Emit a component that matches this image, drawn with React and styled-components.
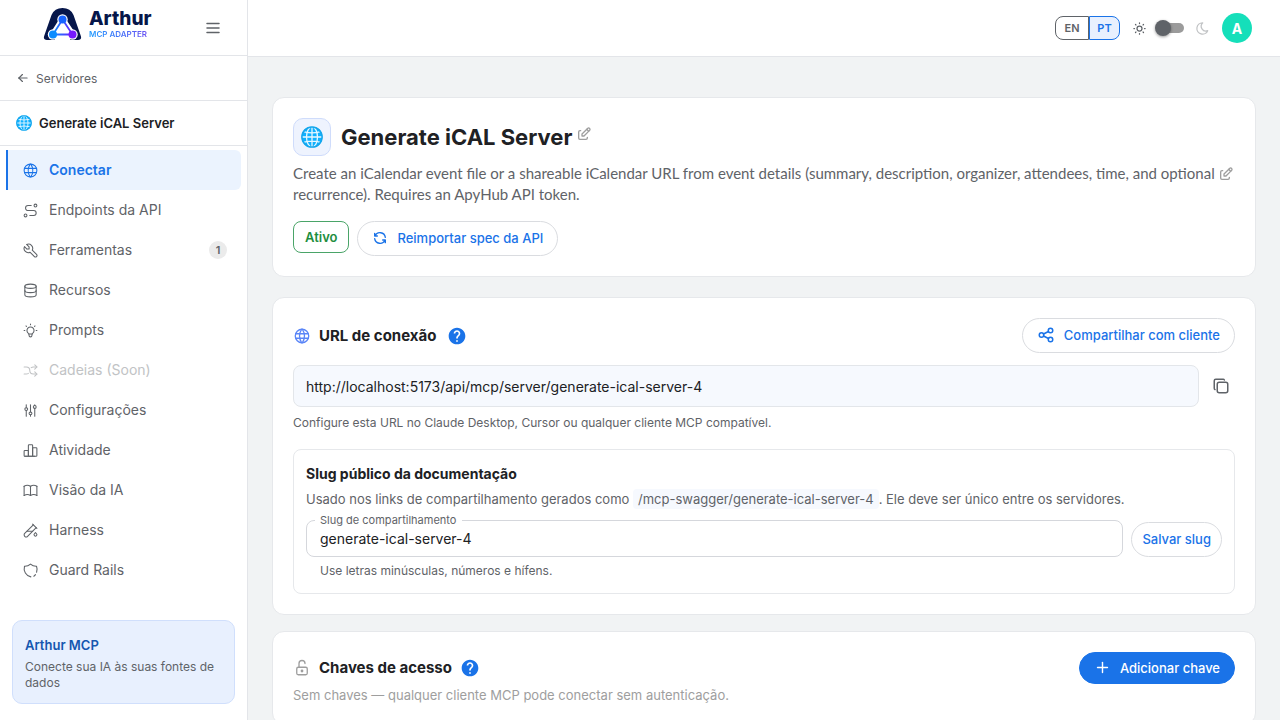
import React, { useState } from "react";
import styled, { createGlobalStyle, css } from "styled-components";
import {
  TbWorld, TbRoute, TbTool, TbDatabase, TbBulb, TbArrowsShuffle, TbAdjustments,
  TbChartBar, TbBook, TbTestPipe, TbMenu2, TbArrowLeft, TbSun, TbMoon, TbEdit,
  TbRefresh, TbShare, TbCopy, TbLockOpen, TbPlus,
} from "react-icons/tb";
import { MdHelp } from "react-icons/md";

const Global = createGlobalStyle`
  * { box-sizing: border-box; }
  body { margin: 0; background: #f1f3f4; }
  body, button, input { font-family: "Inter", "Liberation Sans", sans-serif; }
  h1, h2, h3, p { margin: 0; }
  button { cursor: pointer; }
  svg { display: block; flex: none; }
`;

const Shell = styled.div`
  display: grid;
  grid-template-columns: 248px minmax(0, 1fr);
  height: 100vh;
  color: #202124;
`;

const Sidebar = styled.aside`
  display: flex;
  flex-direction: column;
  background: #fff;
  border-right: 1px solid #e3e5e9;
`;

const Brand = styled.div`
  display: flex;
  align-items: center;
  justify-content: space-between;
  height: 56px;
  padding: 0 25px 8px 43px;
  border-bottom: 1px solid #e3e5e9;
`;

const Logo = styled.div`
  display: flex;
  align-items: center;
  gap: 6px;
`;

const LogoText = styled.div`
  display: flex;
  flex-direction: column;
`;

const LogoName = styled.span`
  font-size: 19px;
  line-height: 22px;
  font-weight: 800;
  color: #06164a;
`;

const LogoTag = styled.span`
  font-size: 8px;
  line-height: 9px;
  font-weight: 600;
  color: transparent;
  background: linear-gradient(90deg, #1d9bff, #6d4bf2);
  background-clip: text;
`;

const IconButton = styled.button`
  display: grid;
  place-items: center;
  padding: 0;
  border: 0;
  background: none;
  color: ${(p) => p.$color || "#5f6368"};
`;

const MenuButton = styled(IconButton)`
  padding-top: 8px;
`;

const BackLink = styled.a`
  display: flex;
  align-items: center;
  gap: 6px;
  height: 45px;
  padding: 0 16px;
  border-bottom: 1px solid #e3e5e9;
  color: #5f6368;
  font-size: 12px;
  text-decoration: none;
`;

const ServerName = styled.div`
  display: flex;
  align-items: center;
  gap: 7px;
  height: 45px;
  padding: 0 16px;
  border-bottom: 1px solid #e3e5e9;
  font-size: 13px;
  font-weight: 600;
`;

const Nav = styled.nav`
  display: flex;
  flex-direction: column;
  padding: 4px 6px;
`;

const NavItem = styled.a`
  display: flex;
  align-items: center;
  gap: 10px;
  height: 40px;
  padding: 0 14px;
  border-left: 2px solid transparent;
  border-radius: 0 6px 6px 0;
  color: #5f6368;
  font-size: 14px;
  line-height: 18px;
  text-decoration: none;
  ${(p) => p.$active && css`
    background: #ebf3fe;
    border-left-color: #1a73e8;
    color: #1a73e8;
    font-weight: 600;
  `}
  ${(p) => p.$disabled && css`color: #c1c3c5;`}
`;

const Count = styled.span`
  display: grid;
  place-items: center;
  width: 18px;
  height: 18px;
  margin-left: auto;
  border-radius: 50%;
  background: #ebebeb;
  font-size: 11px;
  font-weight: 600;
`;

const Promo = styled.div`
  margin: auto 12px 16px;
  padding: 16px 12px 12px;
  border: 1px solid #d0dffc;
  border-radius: 10px;
  background: #e8f0fe;
  color: #5f6368;
  font-size: 12px;
  line-height: 16px;
`;

const PromoTitle = styled.h3`
  margin-bottom: 5px;
  font-size: 13px;
  line-height: 17px;
  font-weight: 600;
  color: #1557b0;
`;

const Body = styled.div`
  display: flex;
  flex-direction: column;
  min-height: 0;
`;

const TopBar = styled.header`
  display: flex;
  flex: none;
  align-items: center;
  justify-content: flex-end;
  height: 57px;
  padding: 0 28px;
  background: #fff;
  border-bottom: 1px solid #e3e5e9;
`;

const Languages = styled.div`
  display: flex;
  margin-right: 12px;
`;

const LanguageButton = styled.button`
  width: ${(p) => (p.$active ? 31 : 34)}px;
  height: 24px;
  padding: 0;
  border: 1px solid ${(p) => (p.$active ? "#1a73e8" : "#5f6368")};
  border-radius: ${(p) => (p.$active ? "0 8px 8px 0" : "8px 0 0 8px")};
  background: ${(p) => (p.$active ? "#e8f0fe" : "#fff")};
  color: ${(p) => (p.$active ? "#1a73e8" : "#5f6368")};
  font-size: 11px;
  font-weight: 600;
`;

const Toggle = styled.input`
  appearance: none;
  display: flex;
  align-items: center;
  width: 30px;
  height: 16px;
  margin: 0 10px 0 8px;
  border-radius: 8px;
  cursor: pointer;
  &::before {
    content: "";
    z-index: 1;
    width: 16px;
    height: 16px;
    border-radius: 50%;
    background: #5f6368;
    box-shadow: 0 1px 3px rgba(0, 0, 0, 0.4);
  }
  &::after {
    content: "";
    width: 28px;
    height: 10px;
    margin-left: -15px;
    border-radius: 5px;
    background: #9b9b9b;
  }
  &:checked::before { margin-left: 14px; }
  &:checked::after { margin-left: -29px; }
`;

const Avatar = styled.button`
  width: 30px;
  height: 30px;
  margin-left: 12px;
  padding: 0;
  border: 0;
  border-radius: 50%;
  background: #15dfba;
  color: #fff;
  font-size: 14px;
  font-weight: 700;
`;

const Main = styled.main`
  flex: 1;
  min-height: 0;
  overflow-y: auto;
  scrollbar-width: none;
  padding: 40px 24px 24px;
`;

const Card = styled.section`
  margin-bottom: ${(p) => p.$gap || 16}px;
  padding: 20px;
  border: 1px solid #e6e8eb;
  border-radius: 12px;
  background: #fff;
`;

const TitleRow = styled.div`
  display: flex;
  align-items: center;
  gap: 10px;
  margin-bottom: 7px;
`;

const ServerIcon = styled.span`
  display: grid;
  place-items: center;
  width: 38px;
  height: 38px;
  border: 1px solid #cfdcfb;
  border-radius: 10px;
  background: #eef3fe;
`;

const PageTitle = styled.h1`
  display: flex;
  align-items: flex-start;
  gap: 4px;
  font-size: 22px;
  line-height: 28px;
  font-weight: 700;
`;

const DescriptionRow = styled.div`
  display: flex;
  align-items: flex-start;
  padding-right: 1px;
`;

const Description = styled.p`
  flex: 1;
  color: #5f6368;
  font-family: "Lato", "Inter", sans-serif;
  font-size: 15px;
  line-height: 21px;
`;

const EditButton = styled(IconButton)`
  padding-top: 3px;
`;

const Actions = styled.div`
  display: flex;
  align-items: flex-start;
  gap: 8px;
  margin-top: 16px;
`;

const Status = styled.span`
  display: flex;
  align-items: center;
  height: 32px;
  padding: 0 11px;
  border: 1px solid #4aa468;
  border-radius: 8px;
  color: #1e8e3e;
  font-size: 13px;
  font-weight: 600;
`;

const Button = styled.button`
  display: flex;
  flex: none;
  align-items: center;
  justify-content: center;
  gap: 9px;
  height: ${(p) => p.$height || 35}px;
  padding: 0 ${(p) => (p.$compact ? 10 : 14)}px 1px;
  border: 1px solid ${(p) => (p.$primary ? "#1a73e8" : "#dadce0")};
  border-radius: 18px;
  background: ${(p) => (p.$primary ? "#1a73e8" : "#fff")};
  color: ${(p) => (p.$primary ? "#fff" : "#1a73e8")};
  font-size: 13px;
  font-weight: 500;
`;

const CardHeader = styled.div`
  display: flex;
  align-items: center;
  justify-content: space-between;
`;

const CardTitle = styled.h2`
  display: flex;
  align-items: center;
  gap: 8px;
  font-size: 15px;
  line-height: 20px;
  font-weight: 700;
`;

const HelpButton = styled(IconButton)`
  margin-left: ${(p) => (p.$spaced ? 3 : 0)}px;
`;

const UrlRow = styled.div`
  display: flex;
  align-items: center;
  gap: 13px;
  margin-top: 12px;
  padding-right: 5px;
`;

const UrlField = styled.input`
  flex: 1;
  min-width: 0;
  height: 42px;
  padding: 0 12px;
  border: 1px solid #e3e6ea;
  border-radius: 8px;
  background: #f6f9fe;
  color: #202124;
  font-size: 14px;
  outline: none;
`;

const Hint = styled.p`
  margin-top: ${(p) => p.$top || 0}px;
  padding-left: ${(p) => p.$indent || 0}px;
  color: ${(p) => (p.$muted ? "#9e9e9e" : "#5f6368")};
  font-size: ${(p) => p.$size || 12}px;
  line-height: 18px;
`;

const SlugPanel = styled.div`
  margin-top: 17px;
  padding: 14px 12px 13px;
  border: 1px solid #e6e8eb;
  border-radius: 8px;
`;

const SlugTitle = styled.h3`
  font-size: 14px;
  line-height: 20px;
  font-weight: 700;
`;

const SlugText = styled.p`
  margin-top: 5px;
  color: #5f6368;
  font-size: 13px;
  line-height: 20px;
`;

const Code = styled.code`
  padding: 2px 5px;
  border-radius: 4px;
  background: #f6f9fe;
  font-family: inherit;
`;

const SlugForm = styled.form`
  display: flex;
  align-items: flex-end;
  gap: 8px;
  margin-top: 3px;
`;

const Field = styled.fieldset`
  flex: 1;
  min-width: 0;
  height: 45px;
  margin: 0;
  padding: 0 13px;
  border: 1px solid #d5d7dc;
  border-radius: 8px;
`;

const Legend = styled.legend`
  margin-left: -5px;
  padding: 0 6px 0 5px;
  color: #5f6368;
  font-size: 11px;
  line-height: 16px;
`;

const SlugInput = styled.input`
  display: block;
  width: 100%;
  height: 20px;
  padding: 0;
  border: 0;
  background: none;
  color: #202124;
  font-size: 14px;
  outline: none;
`;

function GlobeEmoji({ size }) {
  return (
    <svg width={size} height={size} viewBox="0 0 24 24" aria-hidden="true">
      <circle cx="12" cy="12" r="11.5" fill="#0fb0ff" />
      <g fill="none" stroke="#e6f7ff" strokeWidth="1.4">
        <path d="M12 1v22M1 12h22M3.500 6.500Q12 8.500 20.500 6.500M3.500 17.500Q12 15.500 20.500 17.500" />
        <ellipse cx="12" cy="12" rx="6" ry="11" />
      </g>
      <circle cx="12" cy="12" r="11" fill="none" stroke="#14a6ec" strokeWidth="1.6" />
    </svg>
  );
}

function ShieldIcon({ size, strokeWidth }) {
  return (
    <svg width={size} height={size} viewBox="0 0 24 24" fill="none" stroke="currentColor" strokeWidth={strokeWidth} strokeLinecap="round" strokeLinejoin="round" aria-hidden="true">
      <path d="M12.500 21A12 12 0 0 1 3.500 6 12 12 0 0 0 12 3a12 12 0 0 0 8.500 3 12 12 0 0 1 .1 8.500M19 17.800q-1 1.500-2.300 2.200" />
    </svg>
  );
}

function LogoMark() {
  return (
    <svg width="40" height="34" viewBox="0 0 40 34" aria-hidden="true">
      <defs>
        <linearGradient id="edge" x1="0" x2="1">
          <stop offset="0" stopColor="#0b8bff" />
          <stop offset="1" stopColor="#6a22ff" />
        </linearGradient>
      </defs>
      <path d="M1.500 28 8.500 8Q11.500 1 19.500 1T30.500 8L37.500 28Q39.500 33 35 33H4Q-.5 33 1.500 28Z" fill="#06164a" />
      <path d="M8 33.500Q19.500 31 31 33.500V34H8Z" fill="#fff" />
      <path d="M19.500 12.500 10 27.500H29.500Z" fill="#fff" stroke="#fff" strokeWidth="6" strokeLinejoin="round" />
      <circle cx="19.500" cy="12.500" r="5.200" fill="#fff" />
      <circle cx="10" cy="27.500" r="5.200" fill="#fff" />
      <circle cx="29.500" cy="27.500" r="5.200" fill="#fff" />
      <path d="M12 29.500H27V34H12Z" fill="#fff" />
      <path d="M19.500 12.500 10 27.500H29.500Z" fill="#fff" stroke="url(#edge)" strokeWidth="1.800" />
      <circle cx="19.500" cy="12.500" r="4" fill="#1764ff" />
      <circle cx="10" cy="27.500" r="4" fill="#0b8bff" />
      <circle cx="29.500" cy="27.500" r="4" fill="#7619ff" />
    </svg>
  );
}

const NAV = [
  { label: "Conectar", icon: TbWorld, active: true },
  { label: "Endpoints da API", icon: TbRoute },
  { label: "Ferramentas", icon: TbTool, count: 1 },
  { label: "Recursos", icon: TbDatabase },
  { label: "Prompts", icon: TbBulb },
  { label: "Cadeias (Soon)", icon: TbArrowsShuffle, disabled: true },
  { label: "Configurações", icon: TbAdjustments },
  { label: "Atividade", icon: TbChartBar },
  { label: "Visão da IA", icon: TbBook },
  { label: "Harness", icon: TbTestPipe },
  { label: "Guard Rails", icon: ShieldIcon },
];

export default function App() {
  const [dark, setDark] = useState(false);
  const [slug, setSlug] = useState("generate-ical-server-4");

  return (
    <>
      <Global />
      <Shell>
        <Sidebar>
          <Brand>
            <Logo>
              <LogoMark />
              <LogoText>
                <LogoName>Arthur</LogoName>
                <LogoTag>MCP ADAPTER</LogoTag>
              </LogoText>
            </Logo>
            <MenuButton aria-label="Menu"><TbMenu2 size={18} /></MenuButton>
          </Brand>
          <BackLink href="#servidores"><TbArrowLeft size={14} />Servidores</BackLink>
          <ServerName><GlobeEmoji size={16} />Generate iCAL Server</ServerName>
          <Nav>
            {NAV.map(({ label, icon: Icon, active, disabled, count }) => (
              <NavItem key={label} href="#" $active={active} $disabled={disabled} aria-disabled={disabled}>
                <Icon size={17} strokeWidth={1.5} />
                {label}
                {count && <Count>{count}</Count>}
              </NavItem>
            ))}
          </Nav>
          <Promo>
            <PromoTitle>Arthur MCP</PromoTitle>
            <p>Conecte sua IA às suas fontes de dados</p>
          </Promo>
        </Sidebar>

        <Body>
          <TopBar>
            <Languages>
              <LanguageButton>EN</LanguageButton>
              <LanguageButton $active>PT</LanguageButton>
            </Languages>
            <TbSun size={15} color="#5f6368" />
            <Toggle type="checkbox" role="switch" aria-label="Tema escuro" checked={dark} onChange={(e) => setDark(e.target.checked)} />
            <TbMoon size={15} color="#c1c3c5" />
            <Avatar>A</Avatar>
          </TopBar>

          <Main>
            <Card $gap={20}>
              <TitleRow>
                <ServerIcon><GlobeEmoji size={22} /></ServerIcon>
                <PageTitle>
                  Generate iCAL Server
                  <EditButton $color="#9e9e9e" aria-label="Editar nome"><TbEdit size={16} /></EditButton>
                </PageTitle>
              </TitleRow>
              <DescriptionRow>
                <Description>
                  Create an iCalendar event file or a shareable iCalendar URL from event details (summary, description, organizer, attendees, time, and optional recurrence). Requires an ApyHub API token.
                </Description>
                <EditButton $color="#9e9e9e" aria-label="Editar descrição"><TbEdit size={16} /></EditButton>
              </DescriptionRow>
              <Actions>
                <Status>Ativo</Status>
                <Button><TbRefresh size={16} />Reimportar spec da API</Button>
              </Actions>
            </Card>

            <Card>
              <CardHeader>
                <CardTitle>
                  <TbWorld size={18} strokeWidth={1.75} color="#5b86f7" />
                  URL de conexão
                  <HelpButton $color="#1a73e8" $spaced aria-label="Ajuda"><MdHelp size={20} /></HelpButton>
                </CardTitle>
                <Button><TbShare size={18} />Compartilhar com cliente</Button>
              </CardHeader>
              <UrlRow>
                <UrlField readOnly aria-label="URL de conexão" value="http://localhost:5173/api/mcp/server/generate-ical-server-4" />
                <IconButton aria-label="Copiar"><TbCopy size={18} /></IconButton>
              </UrlRow>
              <Hint $top={7}>Configure esta URL no Claude Desktop, Cursor ou qualquer cliente MCP compatível.</Hint>
              <SlugPanel>
                <SlugTitle>Slug público da documentação</SlugTitle>
                <SlugText>
                  Usado nos links de compartilhamento gerados como <Code>/mcp-swagger/generate-ical-server-4</Code>. Ele deve ser único entre os servidores.
                </SlugText>
                <SlugForm onSubmit={(e) => e.preventDefault()}>
                  <Field>
                    <Legend><label htmlFor="slug">Slug de compartilhamento</label></Legend>
                    <SlugInput id="slug" value={slug} onChange={(e) => setSlug(e.target.value)} />
                  </Field>
                  <Button $compact>Salvar slug</Button>
                </SlugForm>
                <Hint $top={5} $indent={14}>Use letras minúsculas, números e hífens.</Hint>
              </SlugPanel>
            </Card>

            <Card>
              <CardHeader>
                <CardTitle>
                  <TbLockOpen size={18} color="#9e9e9e" strokeWidth={1.75} />
                  Chaves de acesso
                  <HelpButton $color="#1a73e8" aria-label="Ajuda"><MdHelp size={20} /></HelpButton>
                </CardTitle>
                <Button $primary $height={32}><TbPlus size={17} />Adicionar chave</Button>
              </CardHeader>
              <Hint $top={2} $size={13} $muted>Sem chaves — qualquer cliente MCP pode conectar sem autenticação.</Hint>
            </Card>
          </Main>
        </Body>
      </Shell>
    </>
  );
}
